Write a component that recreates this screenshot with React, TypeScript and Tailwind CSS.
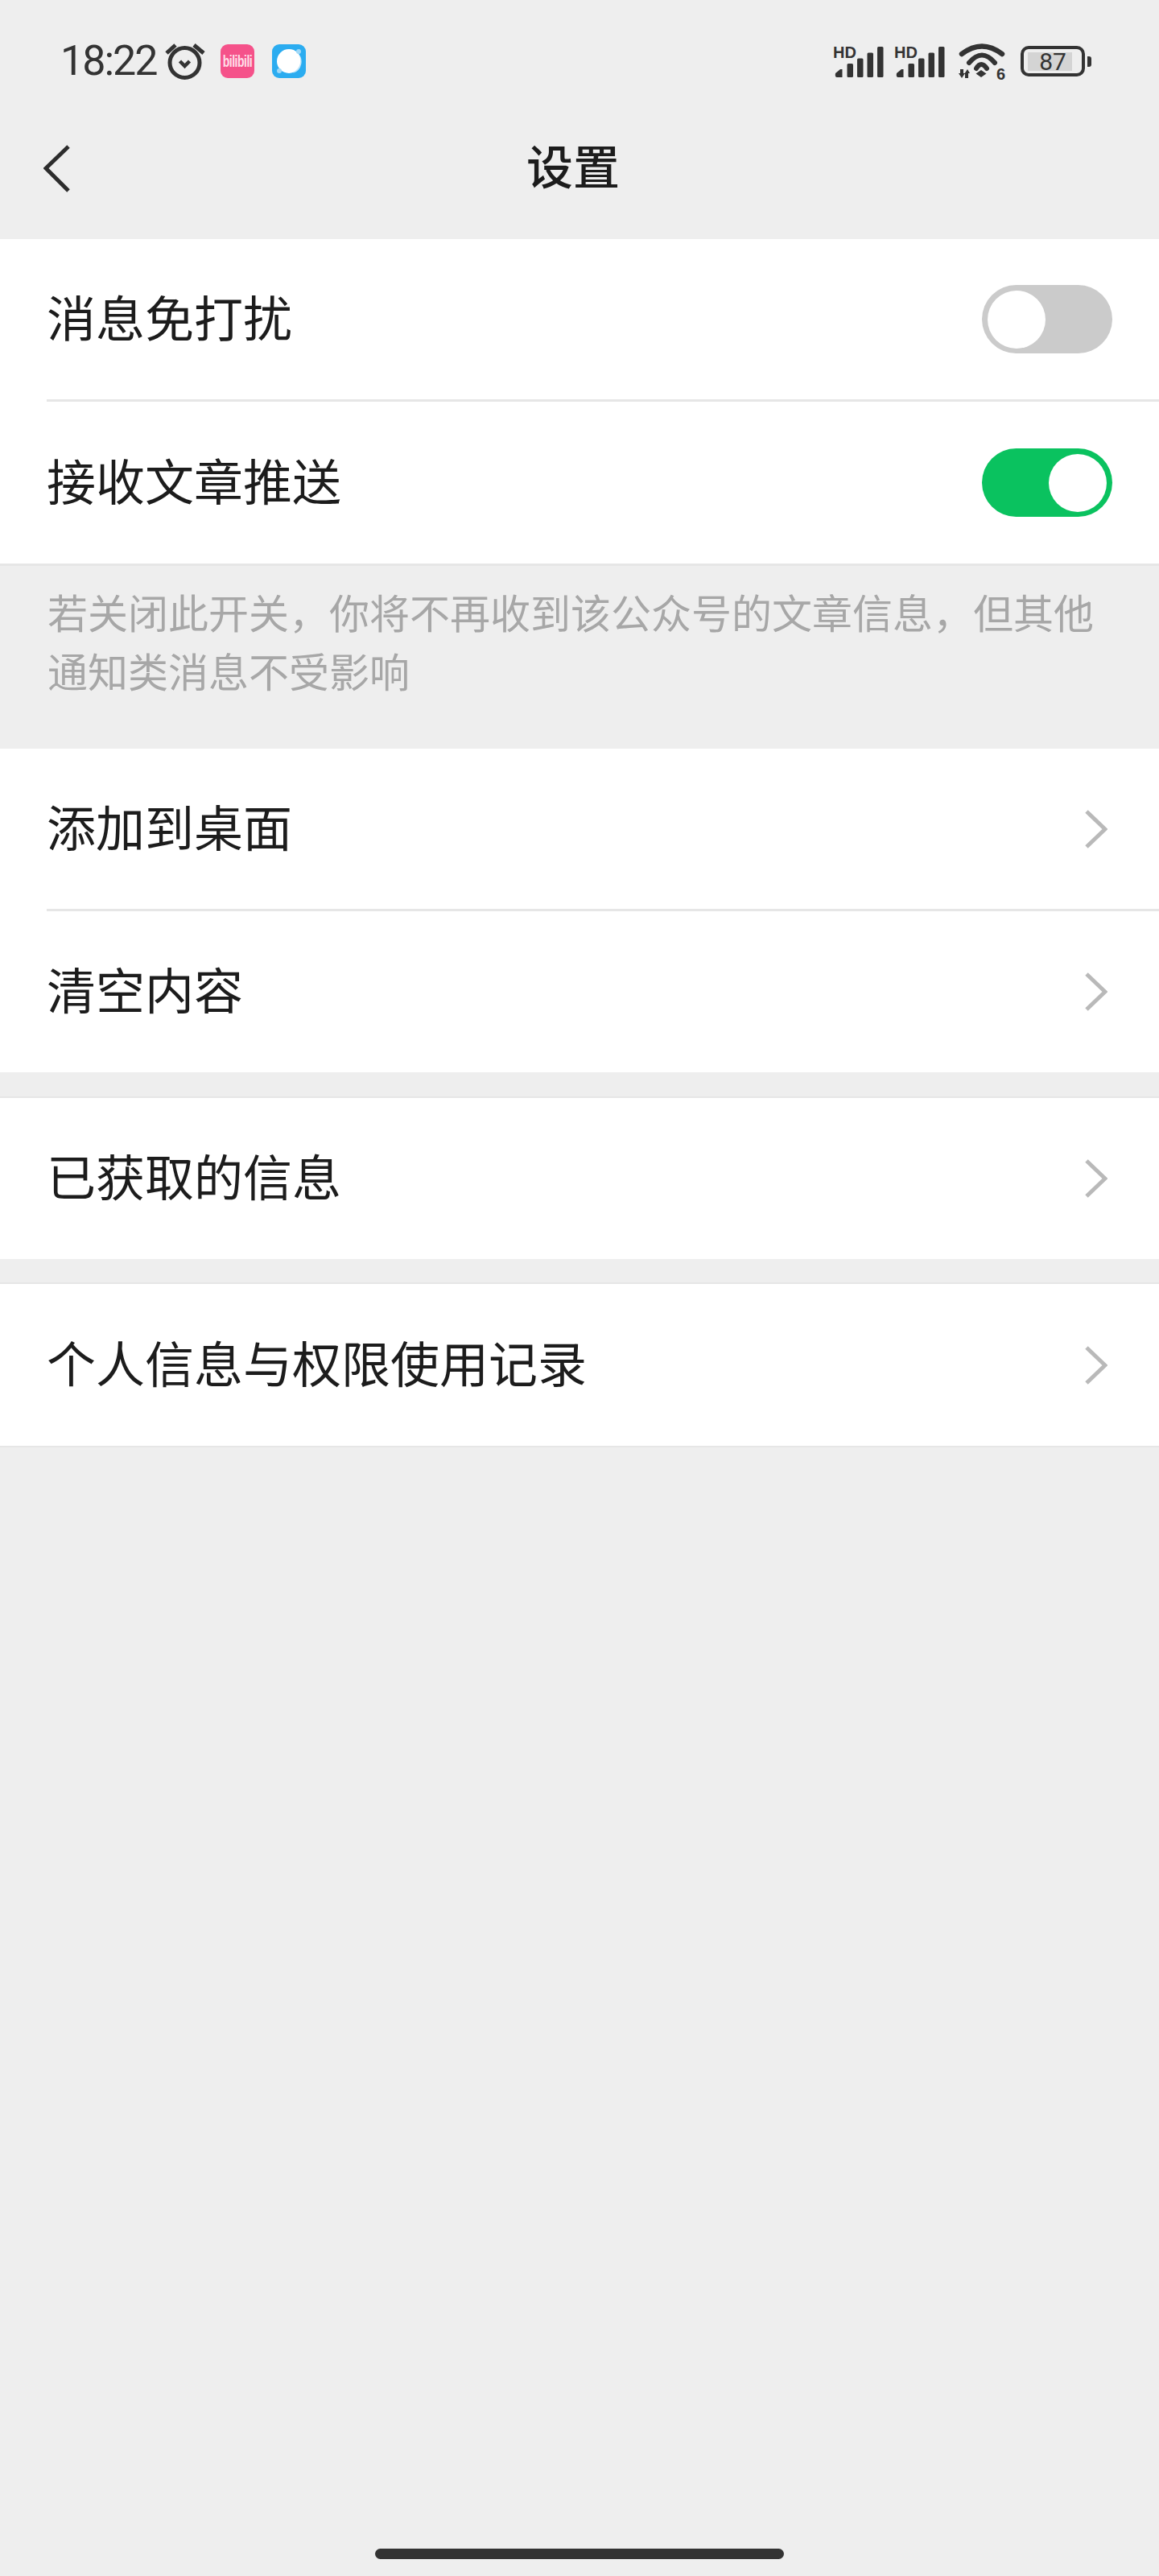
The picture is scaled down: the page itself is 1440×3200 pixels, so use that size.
const ROW_FONT = "font-['Noto_Sans_CJK_SC',sans-serif]"

function Signal() {
  return (
    <svg width="63" height="40" viewBox="0 0 63 40" fill="#333" className="overflow-visible">
      <text x="0" y="16" fontSize="20" fontWeight="700" fontFamily="Liberation Sans, sans-serif">HD</text>
      <path d="M3 35l6-5h2.500v10H5q-3 0-2-5z" />
      <rect x="17.500" y="23" width="7.500" height="17" rx="1.500" />
      <rect x="30" y="16.500" width="7.500" height="23.500" rx="1.500" />
      <rect x="42.500" y="9.500" width="7.500" height="30.500" rx="1.500" />
      <rect x="55" y="2" width="7.500" height="38" rx="1.500" />
    </svg>
  )
}

function Wifi() {
  return (
    <svg width="60" height="48" viewBox="0 0 60 48" fill="none" className="overflow-visible">
      <path d="M5 13Q30-6 55 13" stroke="#333" strokeWidth="6.500" strokeLinecap="round" />
      <path d="M14 24Q30 5 46 24" stroke="#333" strokeWidth="6" strokeLinecap="round" />
      <path d="M23 31Q29 21 36 31" stroke="#333" strokeWidth="6" strokeLinecap="round" />
      <path d="M29 33l6.500 4.500-6.500 4.500-6.500-4.500z" fill="#333" />
      <path d="M3 32h4v5h2l-4 6-4-6h2zM13 43H9v-5H8l4-6 3 5h-2z" fill="#333" />
      <text x="48" y="45" fontSize="20" fontWeight="700" fill="#333" fontFamily="Liberation Sans, sans-serif">6</text>
    </svg>
  )
}

function Switch({ on }: { on: boolean }) {
  return (
    <div
      className={`flex h-[85px] w-[162px] items-center rounded-full px-[7px] ${
        on ? 'justify-end bg-[#0ac25f]' : 'justify-start bg-[#cbcbcb]'
      }`}
    >
      <div className="h-[72px] w-[72px] rounded-full bg-white" />
    </div>
  )
}

function Chevron() {
  return (
    <svg width="30" height="50" viewBox="0 0 30 50" fill="none" className="mr-[64px]">
      <path d="M4 3l23 22L4 47" stroke="#b9b9b9" strokeWidth="5" />
    </svg>
  )
}

function Row({
  label,
  height,
  divider = false,
  children,
}: {
  label: string
  height: string
  divider?: boolean
  children: React.ReactNode
}) {
  return (
    <div className={`flex items-stretch bg-white pl-[58px] ${height}`}>
      <div className={`flex flex-1 items-center justify-between ${divider ? 'border-b-[3px] border-[#e6e6e6]' : ''}`}>
        <span className={`pb-[8px] text-[61px] leading-[80px] text-[#1c1c1c] ${ROW_FONT}`}>{label}</span>
        {children}
      </div>
    </div>
  )
}

export default function App() {
  return (
    <div className={`flex min-h-[3200px] flex-col bg-[#eeeeee] ${ROW_FONT}`}>
      <div className="flex h-[119px] items-start justify-between pl-[75px] pr-[84px] pt-[52px]">
        <div className="flex h-[48px] items-center">
          <span className="w-[118px] font-['Roboto',sans-serif] text-[52px] leading-[48px] tracking-[-2px] text-[#333]">
            18:22
          </span>
          <svg width="50" height="48" viewBox="0 0 50 48" fill="none" stroke="#333" className="ml-[12px]">
            <circle cx="24.500" cy="26" r="18.500" strokeWidth="5" />
            <path d="M2 14L13 4M36 4l12 10" strokeWidth="5" />
            <path d="M18.500 24l6 6 6-6" strokeWidth="4.500" />
          </svg>
          <div className="ml-[19px] flex h-[42px] w-[42px] items-center justify-center overflow-hidden rounded-[9px] bg-[#f5528a] font-['Liberation_Sans',sans-serif] text-[14px] font-bold tracking-[-0.500px] text-[#ffdfe9]">
            <span className="scale-y-[1.4]">bilibili</span>
          </div>
          <svg width="42" height="42" viewBox="0 0 42 42" className="ml-[22px]">
            <rect width="42" height="42" rx="9" fill="#2bacf0" />
            <circle cx="21" cy="21" r="15" fill="#ffffff" />
            <path d="M31 10a15 15 0 0 1-1 22L26 36a15 15 0 0 0 5-26z" fill="#bfe4f9" />
            <circle cx="33" cy="9" r="3" fill="#9fd8f7" />
            <circle cx="9" cy="33" r="3" fill="#9fd8f7" />
          </svg>
        </div>
        <div className="flex h-[48px] items-center">
          <Signal />
          <div className="ml-[13px]">
            <Signal />
          </div>
          <div className="ml-[16px] mt-[4px]">
            <Wifi />
          </div>
          <div className="ml-[18px] flex h-[38px] w-[80px] items-center rounded-[10px] border-[4px] border-[#333] pl-[5px]">
            <div className="flex h-[23px] w-[55px] items-center justify-center bg-[#d4d4d4] pl-[7px] font-['Roboto',sans-serif] text-[30px] leading-[23px] text-[#333]">
              87
            </div>
          </div>
          <div className="ml-[3px] h-[13px] w-[5px] rounded-r-[3px] bg-[#333]" />
        </div>
      </div>

      <div className="grid h-[178px] grid-cols-[1fr_auto_1fr] items-center pl-[54px] pr-[70px]">
        <svg width="34" height="62" viewBox="0 0 34 62" fill="none" className="mt-[3px]">
          <path d="M31 3L3 30l28 28" stroke="#2c2c2c" strokeWidth="5" />
        </svg>
        <span className="pb-[8px] text-[58px] font-medium leading-[80px] text-[#1c1c1c]">设置</span>
        <span />
      </div>

      <Row label="消息免打扰" height="h-[202px]" divider>
        <div className="mr-[58px]">
          <Switch on={false} />
        </div>
      </Row>
      <Row label="接收文章推送" height="h-[201px]">
        <div className="mr-[58px]">
          <Switch on />
        </div>
      </Row>

      <div className="h-[230px] border-t-[3px] border-[#e6e6e6] pl-[59px] pr-[60px] pt-[20px] text-[50px] leading-[73px] text-[#a7a7a7]">
        若关闭此开关，你将不再收到该公众号的文章信息，但其他
        <br />
        通知类消息不受影响
      </div>

      <Row label="添加到桌面" height="h-[202px]" divider>
        <Chevron />
      </Row>
      <Row label="清空内容" height="h-[200px]">
        <Chevron />
      </Row>

      <div className="h-[32px] border-b-[2px] border-[#e6e6e6]" />
      <Row label="已获取的信息" height="h-[200px]">
        <Chevron />
      </Row>
      <div className="h-[31px] border-b-[2px] border-[#e6e6e6]" />
      <Row label="个人信息与权限使用记录" height="h-[201px]">
        <Chevron />
      </Row>
      <div className="border-t-[2px] border-[#e6e6e6]" />

      <div className="mt-auto flex justify-center pb-[21px]">
        <div className="h-[13px] w-[508px] rounded-full bg-[#333]" />
      </div>
    </div>
  )
}
